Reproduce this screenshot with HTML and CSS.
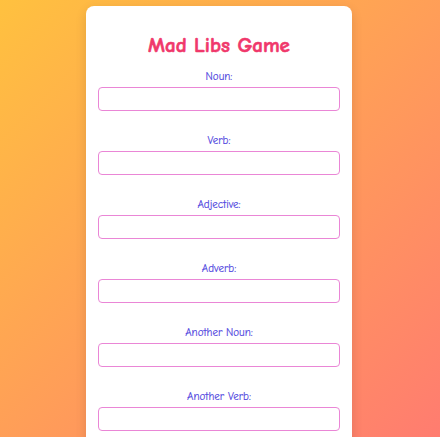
FILE: index.html
```html
<!DOCTYPE html>
<html>
<head>
<meta charset="utf-8">
<link rel="stylesheet" href="styles.css">
</head>
<body>
<div class="card">
  <h1 class="title">Mad Libs Game</h1>
  <form class="form">
    <div class="field"><label class="label">Noun:</label><input class="input" type="text"></div>
    <div class="field"><label class="label">Verb:</label><input class="input" type="text"></div>
    <div class="field"><label class="label">Adjective:</label><input class="input" type="text"></div>
    <div class="field"><label class="label">Adverb:</label><input class="input" type="text"></div>
    <div class="field"><label class="label">Another Noun:</label><input class="input" type="text"></div>
    <div class="field"><label class="label">Another Verb:</label><input class="input" type="text"></div>
  </form>
</div>
</body>
</html>
```
FILE: styles.css
```css
html, body {
  margin: 0;
  padding: 0;
}
body {
  min-height: 437px;
  background: linear-gradient(135deg, #ffc13f 0%, #ff7c70 100%);
  background-attachment: fixed;
  font-family: "Comic Sans MS", "Comic Neue", cursive;
  display: flex;
  justify-content: center;
  align-items: flex-start;
  padding-top: 6px;
  overflow: hidden;
}
.card {
  width: 242px;
  margin-left: -2px;
  background: #fff;
  border-radius: 8px;
  padding: 18px 12px 20px;
  box-shadow: 0 4px 12px rgba(0,0,0,0.12);
}
.title {
  margin: 7px 0 10px;
  text-align: center;
  color: #f0386b;
  font-size: 21px;
  font-weight: bold;
  line-height: 28px;
  -webkit-text-stroke: 0.6px #f0386b;
}
.form {
  display: flex;
  flex-direction: column;
  gap: 22px;
}
.field {
  display: flex;
  flex-direction: column;
  align-items: center;
  gap: 2px;
}
.label {
  color: #5046e0;
  font-size: 11px;
  line-height: 16px;
  -webkit-text-stroke: 0.15px #5046e0;
}
.input {
  box-sizing: border-box;
  width: 100%;
  height: 24px;
  border: 1.5px solid #ea86d6;
  border-radius: 4px;
  padding: 4px 8px;
  margin: 0;
  font-family: inherit;
  outline: none;
  background: #fff;
}
```
